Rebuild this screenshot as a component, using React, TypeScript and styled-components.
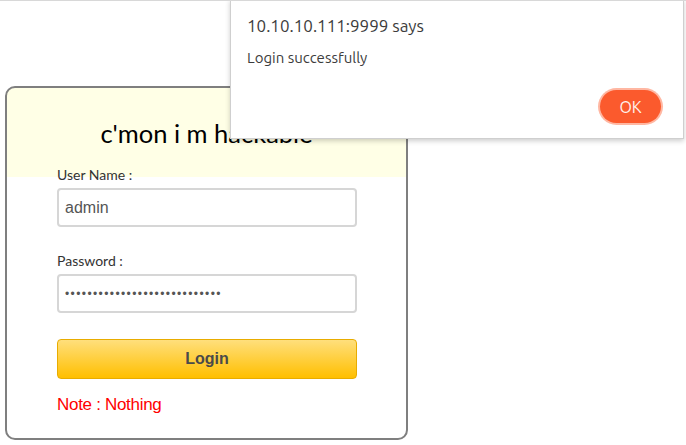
import React, { FC } from 'react';
import styled, { createGlobalStyle } from 'styled-components';

const GlobalStyle = createGlobalStyle`
  html, body {
    margin: 0;
    padding: 0;
    background: #fff;
  }
  body {
    font-family: 'Liberation Sans', Arial, sans-serif;
  }
`;

const Page = styled.div`
  position: relative;
  width: 686px;
  height: 445px;
  overflow: hidden;
  border-top: 1px solid #d8d8d8;
  box-sizing: border-box;
  padding: 85px 0 0 5px;
`;

const Card = styled.div`
  width: 403px;
  box-sizing: border-box;
  border: 2px solid #7f7f7f;
  border-radius: 10px;
  background: linear-gradient(#ffffe6 0, #ffffe6 89px, #fff 89px);
  padding: 30px 0 23px 50px;
  display: flex;
  flex-direction: column;
`;

const Title = styled.h2`
  margin: 0 0 18px -50px;
  font-family: Lato, 'Open Sans', sans-serif;
  font-weight: 400;
  font-size: 25.5px;
  line-height: 30px;
  color: #000;
  text-align: center;
`;

const Label = styled.label`
  font-family: Lato, 'Open Sans', sans-serif;
  font-size: 14px;
  line-height: 18px;
  color: #333;
  margin-bottom: 4px;
`;

const Field = styled.input<{ $gap?: number }>`
  width: 300px;
  height: 39px;
  box-sizing: border-box;
  border: 2px solid #d6d6d6;
  border-radius: 4px;
  padding: 0 6px;
  font-family: 'Liberation Sans', Arial, sans-serif;
  font-size: 16px;
  color: #555;
  background: #fff;
  outline: none;
  margin-bottom: ${p => p.$gap ?? 25}px;
  &[type='password'] {
    font-size: 12px;
    letter-spacing: 1.4px;
  }
`;

const LoginButton = styled.button`
  width: 300px;
  height: 40px;
  box-sizing: border-box;
  border: 1px solid #e8ac00;
  border-radius: 4px;
  background: linear-gradient(#ffdf7c, #ffbf00);
  font-family: 'Liberation Sans', Arial, sans-serif;
  font-weight: 700;
  font-size: 16px;
  color: #4a4a4a;
  margin-bottom: 16px;
`;

const Note = styled.div`
  font-family: 'Liberation Sans', Arial, sans-serif;
  font-size: 17px;
  line-height: 20px;
  letter-spacing: -0.3px;
  color: #ff0000;
`;

const Dialog = styled.div`
  position: absolute;
  left: 230px;
  top: -2px;
  width: 454px;
  height: 140px;
  box-sizing: border-box;
  background: #fff;
  border: 1px solid #cfcfcf;
  box-shadow: 0 2px 5px rgba(0, 0, 0, 0.2);
  padding: 15px 22px 0 16px;
  display: flex;
  flex-direction: column;
  font-family: Ubuntu, 'Noto Sans', sans-serif;
`;

const DialogTitle = styled.div`
  font-size: 17px;
  line-height: 22px;
  color: #3c3c3c;
  margin-bottom: 12px;
`;

const DialogMessage = styled.div`
  font-size: 15px;
  line-height: 18px;
  color: #3c3c3c;
`;

const DialogActions = styled.div`
  display: flex;
  justify-content: flex-end;
  margin-top: 23px;
`;

const OkButton = styled.button`
  width: 61px;
  height: 33px;
  border: none;
  border-radius: 17px;
  background: #fb5a2d;
  box-shadow: 0 0 0 2px #ffb7a2;
  color: #fff2ec;
  font-family: Ubuntu, 'Noto Sans', sans-serif;
  font-size: 16px;
`;

const App: FC = () => {
  return (
    <Page>
      <GlobalStyle />
      <Card>
        <Title>c'mon i m hackable</Title>
        <Label>User Name :</Label>
        <Field type='text' value='admin' readOnly />
        <Label>Password :</Label>
        <Field type='password' value='abcdefghijklmnopqrstuvwxyz12' readOnly $gap={26} />
        <LoginButton>Login</LoginButton>
        <Note>Note : Nothing</Note>
      </Card>
      <Dialog>
        <DialogTitle>10.10.10.111:9999 says</DialogTitle>
        <DialogMessage>Login successfully</DialogMessage>
        <DialogActions>
          <OkButton>OK</OkButton>
        </DialogActions>
      </Dialog>
    </Page>
  );
};

export default App;
